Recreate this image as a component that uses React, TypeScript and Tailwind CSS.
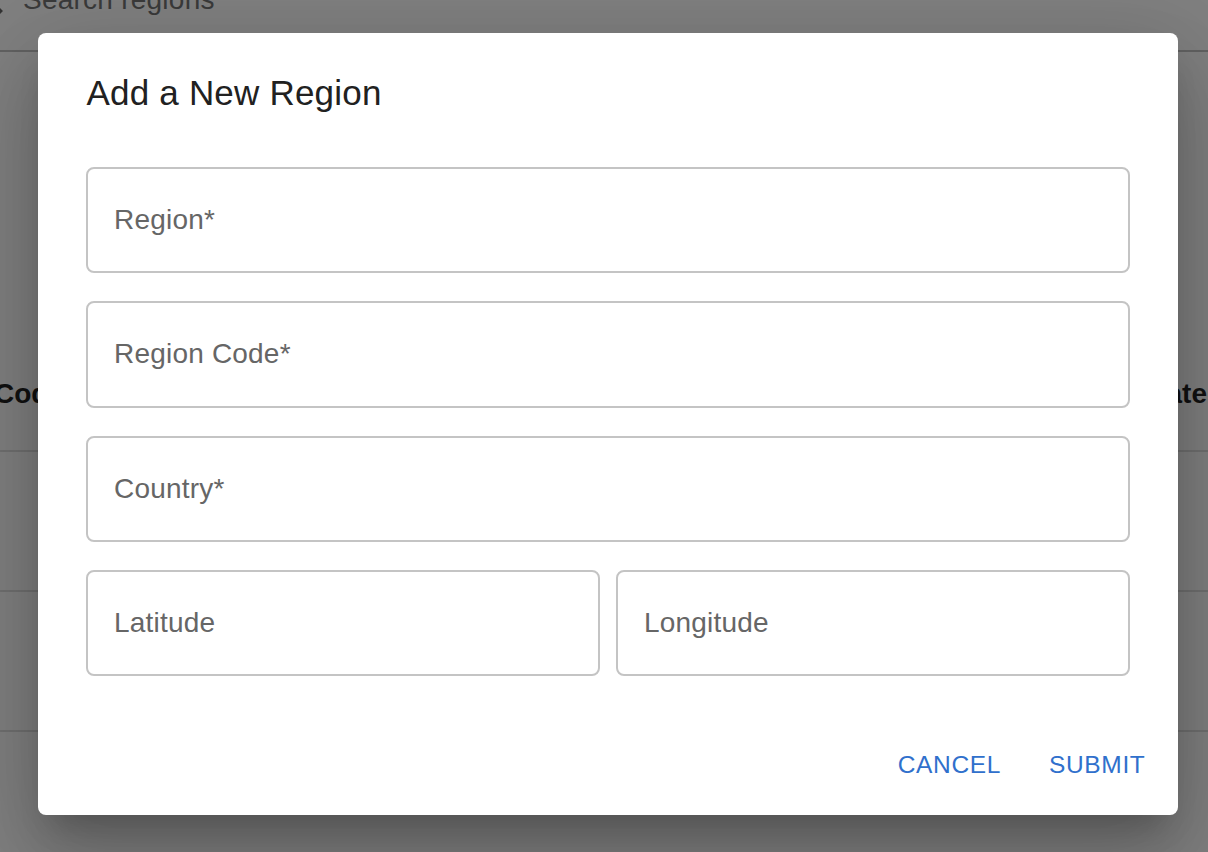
import React from "react";

function Field({ label, tall = false }: { label: string; tall?: boolean }) {
  return (
    <label
      className={`flex min-w-0 flex-1 items-center rounded-[8px] border-2 border-[#c4c4c4] px-[26px] text-[28px] tracking-[0.2px] text-[#666666] ${tall ? "h-[107px] pb-px" : "h-[106px]"}`}
    >
      <span>{label}</span>
    </label>
  );
}

function Backdrop() {
  return (
    <div className="flex h-full flex-col bg-[#808080] text-[28px] text-[#3a3a3a]">
      <div className="flex h-[52px] shrink-0 items-start border-b-2 border-[#626262]">
        <svg className="-ml-[38px] -mt-[27px] size-[48px] shrink-0" viewBox="0 0 24 24" fill="#333333">
          <path d="M15.5 14h-.79l-.28-.27C15.41 12.59 16 11.11 16 9.5 16 5.91 13.09 3 9.5 3S3 5.91 3 9.5 5.91 16 9.5 16c1.61 0 3.09-.59 4.23-1.57l.27.28v.79l5 4.99L20.49 19l-4.99-5zm-6 0C7.01 14 5 11.99 5 9.5S7.01 5 9.5 5 14 7.01 14 9.5 11.99 14 9.5 14z" />
        </svg>
        <span className="-mt-[16px] ml-[13px] leading-[32px] tracking-[0.24px]">Search regions</span>
      </div>
      <div className="flex h-[400px] shrink-0 items-end justify-between border-b-2 border-[#707070] pb-[40px] font-bold text-[#111111]">
        <span className="-ml-[6px] leading-[32px]">Code</span>
        <span className="mr-px leading-[32px]">Coordinate</span>
      </div>
      <div className="h-[140px] shrink-0 border-b-2 border-[#707070]" />
      <div className="h-[140px] shrink-0 border-b-2 border-[#707070]" />
    </div>
  );
}

export default function App() {
  return (
    <div className="relative h-[852px] w-[1208px] overflow-hidden font-['Liberation_Sans',Arial,sans-serif] antialiased">
      <Backdrop />
      <div className="absolute inset-0 px-[38px] pt-[33px]">
        <section className="flex h-[782px] w-[1140px] flex-col rounded-[8px] bg-white px-[48px] pt-[36px] shadow-[0_22px_30px_-14px_rgba(0,0,0,0.2),0_48px_76px_6px_rgba(0,0,0,0.14),0_18px_92px_16px_rgba(0,0,0,0.12)]">
          <h1 className="pl-[0.5px] text-[35px] leading-[48px] tracking-[0.2px] text-[#212121]">Add a New Region</h1>
          <div className="mt-[50px] flex flex-col gap-[28px]">
            <div className="flex"><Field label="Region*" /></div>
            <div className="flex"><Field label="Region Code*" tall /></div>
            <div className="flex"><Field label="Country*" /></div>
            <div className="flex gap-[16px]"><Field label="Latitude" /><Field label="Longitude" /></div>
          </div>
          <div className="-mr-[15.5px] mt-[64px] flex justify-end gap-[48px] text-[24.5px] leading-[50px] tracking-[0.65px] text-[#3070cc]">
            <button>CANCEL</button>
            <button>SUBMIT</button>
          </div>
        </section>
      </div>
    </div>
  );
}
